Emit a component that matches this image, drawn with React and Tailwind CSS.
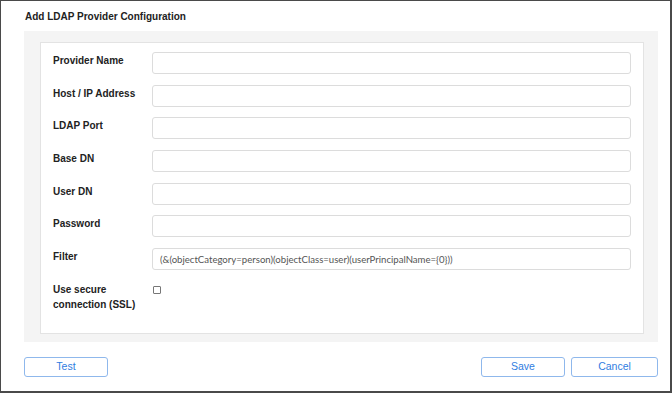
import { useState } from 'react';

const fields = [
  { label: 'Provider Name', value: '' },
  { label: 'Host / IP Address', value: '' },
  { label: 'LDAP Port', value: '' },
  { label: 'Base DN', value: '' },
  { label: 'User DN', value: '' },
  { label: 'Password', value: '' },
  { label: 'Filter', value: '(&(objectCategory=person)(objectClass=user)(userPrincipalName={0}))' },
];

export default function App() {
  const [ssl, setSsl] = useState(false);

  return (
    <div
      className="w-[672px] h-[393px] bg-white border-t border-l border-r-2 border-b-2 border-[#4a4a4a] flex flex-col"
      style={{ fontFamily: '"Liberation Sans", Arial, sans-serif' }}
    >
      {/* Title */}
      <div className="pl-[24px] pr-[12px] h-[30px] flex items-center">
        <h1 className="text-[10px] font-bold text-[#222]">Add LDAP Provider Configuration</h1>
      </div>

      {/* Gray panel */}
      <div className="ml-[23px] mr-[12px] bg-[#f4f4f4] pt-[11px] pb-[8px] pl-[16px] pr-[14px] h-[311px]">
        <div className="bg-white border border-[#e3e3e3] h-full pt-[9px] pl-[12px] pr-[12px]">
          <div className="flex flex-col gap-[10.7px]">
            {fields.map((f) => (
              <div key={f.label} className="flex items-start">
                <label className="w-[99px] shrink-0 text-[10px] font-bold text-[#222] leading-[14px] pt-[2px]">
                  {f.label}
                </label>
                <input
                  type="text"
                  defaultValue={f.value}
                  className="flex-1 h-[22px] border border-[#dcdcdc] rounded-[3px] px-[7px] text-[9.6px] text-[#555] outline-none"
                  style={{ fontFamily: 'Lato, sans-serif' }}
                />
              </div>
            ))}
            <div className="flex items-start">
              <label className="w-[99px] shrink-0 text-[10px] font-bold text-[#222] leading-[15px] pt-[1px]">
                Use secure
                <br />
                connection (SSL)
              </label>
              <input
                type="checkbox"
                checked={ssl}
                onChange={(e) => setSsl(e.target.checked)}
                className="appearance-none w-[8px] h-[8px] mt-[5px] ml-[1px] border border-[#777] rounded-[1px] bg-white"
              />
            </div>
          </div>
        </div>
      </div>

      {/* Buttons */}
      <div className="ml-[23px] mr-[12px] mt-[15px] flex items-center">
        <button className="w-[84px] h-[20px] border border-[#8fb8ec] rounded-[3px] text-[10.5px] text-[#2f7de1] bg-white">
          Test
        </button>
        <div className="flex-1" />
        <button className="w-[84px] h-[20px] border border-[#8fb8ec] rounded-[3px] text-[10.5px] text-[#2f7de1] bg-white">
          Save
        </button>
        <button className="ml-[6px] w-[87px] h-[20px] border border-[#8fb8ec] rounded-[3px] text-[10.5px] text-[#2f7de1] bg-white">
          Cancel
        </button>
      </div>
    </div>
  );
}
